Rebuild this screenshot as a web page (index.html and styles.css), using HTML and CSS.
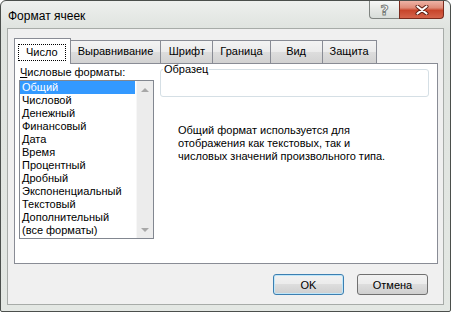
FILE: index.html
```html
<!DOCTYPE html>
<html lang="ru">
<head>
  <meta charset="UTF-8">
  <title>Формат ячеек</title>
  <link rel="stylesheet" href="styles.css">
</head>
<body>
  <div class="window">
    <!-- Title bar -->
    <div class="titlebar">
      <span class="title">Формат ячеек</span>
      <div class="caption-buttons">
        <button class="cap-btn help" type="button">?</button>
        <button class="cap-btn close" type="button">
          <svg width="14" height="10" viewBox="0 0 14 10">
            <path d="M2.5 1.5 L11.5 8.5 M11.5 1.5 L2.5 8.5" stroke="#5b1d12" stroke-width="4" stroke-linecap="round"/>
            <path d="M2.5 1.5 L11.5 8.5 M11.5 1.5 L2.5 8.5" stroke="#fff" stroke-width="2.2" stroke-linecap="round"/>
          </svg>
        </button>
      </div>
    </div>

    <div class="client">
      <!-- Tabs -->
      <div class="tabs">
        <div class="tab active"><span class="focus">Число</span></div>
        <div class="tab">Выравнивание</div>
        <div class="tab">Шрифт</div>
        <div class="tab">Граница</div>
        <div class="tab">Вид</div>
        <div class="tab">Защита</div>
      </div>

      <div class="tab-panel">
        <div class="formats">
          <label class="formats-label"><u>Ч</u>исловые форматы:</label>
          <div class="listbox">
            <ul class="items">
              <li class="selected">Общий</li>
              <li>Числовой</li>
              <li>Денежный</li>
              <li>Финансовый</li>
              <li>Дата</li>
              <li>Время</li>
              <li>Процентный</li>
              <li>Дробный</li>
              <li>Экспоненциальный</li>
              <li>Текстовый</li>
              <li>Дополнительный</li>
              <li>(все форматы)</li>
            </ul>
            <div class="scrollbar">
              <span class="arrow up"></span>
              <span class="arrow down"></span>
            </div>
          </div>
        </div>

        <div class="details">
          <fieldset class="sample">
            <legend>Образец</legend>
            <div class="sample-value"></div>
          </fieldset>
          <p class="description">Общий формат используется для<br>отображения как текстовых, так и<br>числовых значений произвольного типа.</p>
        </div>
      </div>

      <!-- Dialog buttons -->
      <div class="dialog-buttons">
        <button class="btn default" type="button">OK</button>
        <button class="btn" type="button">Отмена</button>
      </div>
    </div>
  </div>
</body>
</html>
```

FILE: styles.css
```css
/* General Styles */
* {
  box-sizing: border-box;
}

body {
  margin: 0;
  font-family: "Liberation Sans", Arial, sans-serif;
  font-size: 11px;
  color: #000;
  background: #fff;
}

.window {
  width: 451px;
  height: 312px;
  display: flex;
  flex-direction: column;
  padding: 0 6px 6px;
  border: 1px solid #4b4f4c;
  border-radius: 6px 6px 2px 2px;
  background: linear-gradient(#eef0ee, #dfe3df 28px, #e3e7e3);
}

/* Title bar */
.titlebar {
  height: 27px;
  flex-shrink: 0;
  display: flex;
  align-items: flex-start;
}

.title {
  margin: 7px 0 0 1px;
  font-size: 12px;
  line-height: 16px;
}

.caption-buttons {
  margin-left: auto;
  display: flex;
}

.cap-btn {
  height: 18px;
  padding: 0;
  display: flex;
  align-items: center;
  justify-content: center;
  border: 1px solid #7f8480;
  border-top: 0;
}

.help {
  width: 30px;
  border-right: 0;
  border-radius: 0 0 0 4px;
  background: linear-gradient(#f7f8f7, #e6e9e6 50%, #d8ddd9);
  font: bold 14px "DejaVu Sans", sans-serif;
  color: #fff;
  -webkit-text-stroke: 1px #7a7f7b;
}

.close {
  width: 45px;
  border-color: #7a2a1c;
  border-radius: 0 0 4px 0;
  background: linear-gradient(#eeb3a6, #df8b78 40%, #c8452b 55%, #d5644b);
}

/* Client area */
.client {
  flex: 1;
  display: flex;
  flex-direction: column;
  padding: 9px 5px 9px 6px;
  border: 1px solid #a7aba8;
  background: #f0f0f0;
}

.tabs {
  height: 25px;
  display: flex;
  align-items: flex-end;
}

.tab {
  height: 23px;
  min-width: 53px;
  padding: 0 7px;
  border: 1px solid #898c95;
  border-bottom: 0;
  background: linear-gradient(#f3f3f3, #ebebeb 50%, #dddddd 50%, #d2d2d2);
  line-height: 21px;
  text-align: center;
  white-space: nowrap;
}

.tab + .tab {
  margin-left: -1px;
}

.tab.active {
  height: 26px;
  margin-bottom: -1px;
  padding: 3px 4px 0 3px;
  position: relative;
  z-index: 1;
  background: #fff;
}

.focus {
  display: inline-block;
  padding: 0 7px;
  line-height: 15px;
  border: 1px dotted #000;
}

.tab-panel {
  height: 201px;
  flex-shrink: 0;
  display: flex;
  gap: 6px;
  padding: 0 8px 0 4px;
  border: 1px solid #898c95;
  background: #fff;
}

/* Number formats list */
.formats {
  width: 135px;
  padding-top: 2px;
}

.formats-label {
  display: block;
  padding-left: 1px;
  margin-bottom: 1px;
  line-height: 13px;
}

.listbox {
  height: 159px;
  display: flex;
  border: 1px solid #828790;
}

.items {
  flex: 1;
  margin: 0 1px 0 0;
  padding: 0;
  list-style: none;
}

.items li {
  height: 13px;
  padding-left: 2px;
  line-height: 13px;
  white-space: nowrap;
}

.items .selected {
  background: #3399ff;
  color: #fff;
}

.scrollbar {
  width: 17px;
  display: flex;
  flex-direction: column;
  justify-content: space-between;
  border-left: 1px solid #f7f7f7;
  background: #ececec;
}

.arrow {
  height: 17px;
  display: flex;
  align-items: center;
  justify-content: center;
}

.arrow::before {
  content: "";
  border-left: 4px solid transparent;
  border-right: 4px solid transparent;
}

.arrow.up::before {
  border-bottom: 4px solid #a8a8a8;
}

.arrow.down::before {
  border-top: 4px solid #a8a8a8;
}

/* Sample and description */
.details {
  flex: 1;
}

.sample {
  min-width: 0;
  margin: 0;
  padding: 0 2px;
  border: 1px solid #d5dfe5;
  border-radius: 3px;
}

.sample legend {
  padding: 0 1px;
  line-height: 11px;
}

.sample-value {
  height: 21px;
}

.description {
  margin: 27px 0 0 18px;
  line-height: 13px;
}

/* Bottom buttons */
.dialog-buttons {
  display: flex;
  justify-content: flex-end;
  gap: 13px;
  margin-top: 10px;
  padding-right: 10px;
}

.btn {
  width: 71px;
  height: 21px;
  padding: 0;
  border: 1px solid #707070;
  border-radius: 3px;
  background: linear-gradient(#f2f2f2, #ebebeb 50%, #dddddd 50%, #cfcfcf);
  font: 11px "Liberation Sans", Arial, sans-serif;
  color: #000;
}

.btn.default {
  border-color: #3c7fb1;
  box-shadow: inset 0 0 0 1px #bfe6f9;
}
```
